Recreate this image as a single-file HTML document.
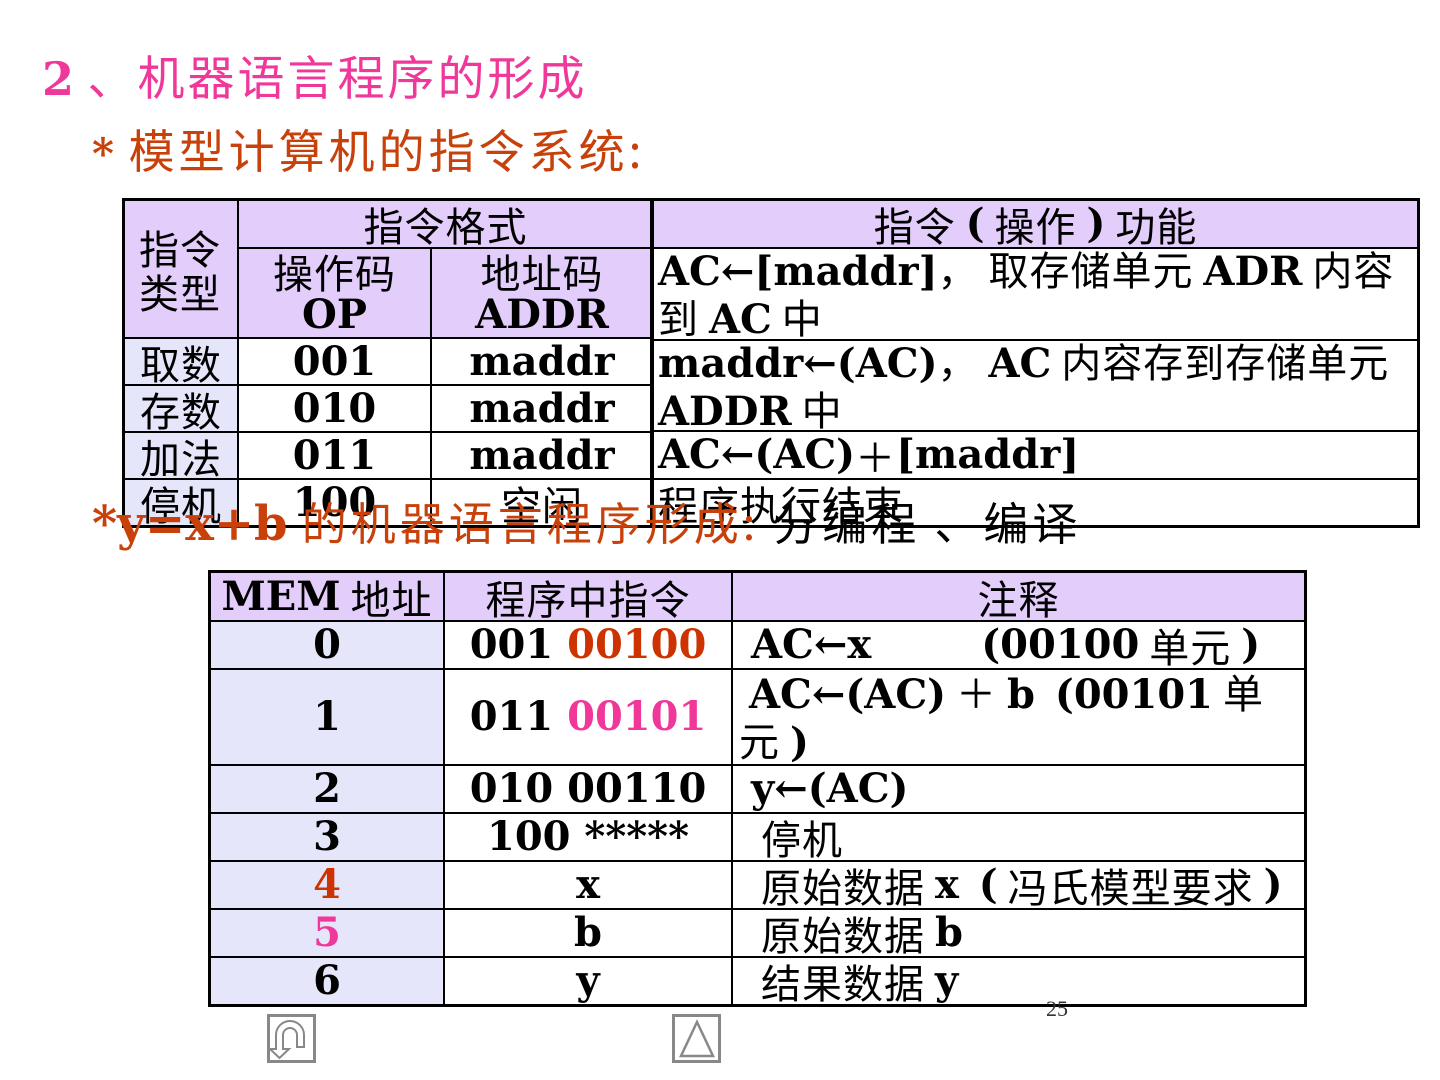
<!DOCTYPE html>
<html><head><meta charset="utf-8"><style>
body{margin:0;width:1440px;height:1080px;background:#fff;position:relative;overflow:hidden;font-family:"DejaVu Serif","Noto Sans CJK SC",serif}
.c{position:absolute;box-sizing:border-box;border:2px solid #000;display:flex;align-items:center;justify-content:center;text-align:center;font-size:40px;line-height:44px;color:#000;white-space:nowrap}
.l{justify-content:flex-start;text-align:left;padding-left:4px}
.cn{font-family:"Noto Sans CJK SC","WenQuanYi Zen Hei",sans-serif;font-weight:normal;letter-spacing:1px}
b{font-family:"DejaVu Serif",serif;font-weight:bold;font-size:40px;letter-spacing:0}
.p{background:#e3cdfb}.v{background:#e6e6fb}
.o{position:absolute;box-sizing:border-box;border:3px solid #000;pointer-events:none}
.t{position:absolute;white-space:nowrap;font-family:"DejaVu Serif","Noto Sans CJK SC",sans-serif}
.cs{font-family:"Noto Sans CJK SC",sans-serif}
</style></head><body>
<div class="t" style="left:42px;top:44px;font-size:47px;color:#f0379a;line-height:62px"><b style="font-size:46px">2</b><span class="cs" style="letter-spacing:3px"> 、机器语言程序的形成</span></div>
<div class="t" style="left:92px;top:118px;font-size:46px;color:#c8400a;line-height:62px"><b style="font-size:42px">* </b><span class="cs" style="letter-spacing:4px">模型计算机的指令系统:</span></div>

<!-- top table -->
<div class="c p cn" style="left:123px;top:199px;width:116px;height:140px;justify-content:flex-start;padding-left:14px;text-align:left;white-space:normal">指令<br>类型</div>
<div class="c p cn" style="left:237px;top:199px;width:417px;height:50px">指令格式</div>
<div class="c p" style="left:237px;top:247px;width:195px;height:92px;flex-direction:column"><span class="cn">操作码</span><b>OP</b></div>
<div class="c p" style="left:430px;top:247px;width:224px;height:92px;flex-direction:column"><span class="cn">地址码</span><b>ADDR</b></div>
<div class="c v cn" style="left:123px;top:337px;width:116px;height:49px">取数</div>
<div class="c" style="left:237px;top:337px;width:195px;height:49px"><b>001</b></div>
<div class="c" style="left:430px;top:337px;width:224px;height:49px"><b>maddr</b></div>
<div class="c v cn" style="left:123px;top:384px;width:116px;height:49px">存数</div>
<div class="c" style="left:237px;top:384px;width:195px;height:49px"><b>010</b></div>
<div class="c" style="left:430px;top:384px;width:224px;height:49px"><b>maddr</b></div>
<div class="c v cn" style="left:123px;top:431px;width:116px;height:49px">加法</div>
<div class="c" style="left:237px;top:431px;width:195px;height:49px"><b>011</b></div>
<div class="c" style="left:430px;top:431px;width:224px;height:49px"><b>maddr</b></div>
<div class="c v cn" style="left:123px;top:478px;width:116px;height:49px">停机</div>
<div class="c" style="left:237px;top:478px;width:195px;height:49px"><b>100</b></div>
<div class="c cn" style="left:430px;top:478px;width:224px;height:49px">空闲</div>

<div class="c p cn" style="left:652px;top:199px;width:767px;height:50px">指令&nbsp;<b>(</b>&nbsp;操作&nbsp;<b>)</b>&nbsp;功能</div>
<div class="c l cn" style="left:652px;top:247px;width:767px;height:94px"><div><b>AC←[maddr]</b>， 取存储单元 <b>ADR</b> 内容<br>到 <b>AC</b> 中</div></div>
<div class="c l cn" style="left:652px;top:339px;width:767px;height:93px"><div><b>maddr←(AC)</b>， <b>AC</b> 内容存到存储单元<br><b>ADDR</b> 中</div></div>
<div class="c l cn" style="left:652px;top:430px;width:767px;height:50px"><b>AC←(AC)</b> ＋ <b>[maddr]</b></div>
<div class="c l cn" style="left:652px;top:478px;width:767px;height:49px">程序执行结束</div>
<div class="o" style="left:122px;top:198px;width:1298px;height:330px"></div>
<div style="position:absolute;left:650px;top:199px;width:3px;height:328px;background:#000"></div>

<div class="t" style="left:92px;top:490px;font-size:45px;line-height:62px;color:#c8400a"><b style="font-size:48px">*y=x+b</b><span class="cs" style="letter-spacing:4px"> 的机器语言程序形成:</span><span class="cs" style="color:#000;letter-spacing:4px"> 分编程 、编译</span></div>

<!-- bottom table -->
<div class="c p" style="left:209px;top:571px;width:236px;height:51px"><b>MEM</b><span class="cn">&nbsp;地址</span></div>
<div class="c p cn" style="left:443px;top:571px;width:290px;height:51px">程序中指令</div>
<div class="c p cn" style="left:731px;top:571px;width:575px;height:51px">注释</div>

<div class="c v" style="left:209px;top:620px;width:236px;height:50px"><b>0</b></div>
<div class="c" style="left:443px;top:620px;width:290px;height:50px"><b>001 <span style="color:#cc3300">00100</span></b></div>
<div class="c l cn" style="left:731px;top:620px;width:575px;height:50px;padding-left:18px"><b>AC←x</b><span style="display:inline-block;width:110px"></span><b>(00100</b>&nbsp;单元&nbsp;<b>)</b></div>

<div class="c v" style="left:209px;top:668px;width:236px;height:98px"><b>1</b></div>
<div class="c" style="left:443px;top:668px;width:290px;height:98px"><b>011 <span style="color:#f0379a">00101</span></b></div>
<div class="c l cn" style="left:731px;top:668px;width:575px;height:98px;padding-left:6px"><div>&nbsp;<b>AC←(AC)</b> ＋ <b>b</b>&nbsp; <b>(00101</b> 单<br>元 <b>)</b></div></div>

<div class="c v" style="left:209px;top:764px;width:236px;height:50px"><b>2</b></div>
<div class="c" style="left:443px;top:764px;width:290px;height:50px"><b>010 00110</b></div>
<div class="c l" style="left:731px;top:764px;width:575px;height:50px;padding-left:18px"><b>y←(AC)</b></div>

<div class="c v" style="left:209px;top:812px;width:236px;height:50px"><b>3</b></div>
<div class="c" style="left:443px;top:812px;width:290px;height:50px"><b>100 *****</b></div>
<div class="c l cn" style="left:731px;top:812px;width:575px;height:50px;padding-left:28px">停机</div>

<div class="c v" style="left:209px;top:860px;width:236px;height:50px"><b style="color:#cc3300">4</b></div>
<div class="c" style="left:443px;top:860px;width:290px;height:50px"><b>x</b></div>
<div class="c l cn" style="left:731px;top:860px;width:575px;height:50px;padding-left:28px">原始数据&nbsp;<b>x</b>&nbsp;&nbsp;<b>(</b>&nbsp;冯氏模型要求&nbsp;<b>)</b></div>

<div class="c v" style="left:209px;top:908px;width:236px;height:50px"><b style="color:#f0379a">5</b></div>
<div class="c" style="left:443px;top:908px;width:290px;height:50px"><b>b</b></div>
<div class="c l cn" style="left:731px;top:908px;width:575px;height:50px;padding-left:28px">原始数据&nbsp;<b>b</b></div>

<div class="c v" style="left:209px;top:956px;width:236px;height:50px"><b>6</b></div>
<div class="c" style="left:443px;top:956px;width:290px;height:50px"><b>y</b></div>
<div class="c l cn" style="left:731px;top:956px;width:575px;height:50px;padding-left:28px">结果数据&nbsp;<b>y</b></div>
<div class="o" style="left:208px;top:570px;width:1099px;height:437px"></div>

<div class="t" style="left:1046px;top:996px;font-size:22px;color:#333;font-family:'Liberation Serif',serif">25</div>

<svg style="position:absolute;left:267px;top:1014px" width="50" height="50" viewBox="0 0 50 50">
<rect x="1.5" y="1.5" width="46" height="46" fill="none" stroke="#888" stroke-width="3"/>
<path d="M9 35 V21 A14 14 0 0 1 37 21 V33 H30 V21 A7 7 0 0 0 16 21 V35 H22 L12.5 44 L3 35 Z" fill="none" stroke="#888" stroke-width="2"/>
</svg>
<svg style="position:absolute;left:672px;top:1014px" width="50" height="50" viewBox="0 0 50 50">
<rect x="1.5" y="1.5" width="46" height="46" fill="none" stroke="#888" stroke-width="3"/>
<path d="M25 8 L41 42 H9 Z" fill="none" stroke="#888" stroke-width="2.5"/>
</svg>
</body></html>
